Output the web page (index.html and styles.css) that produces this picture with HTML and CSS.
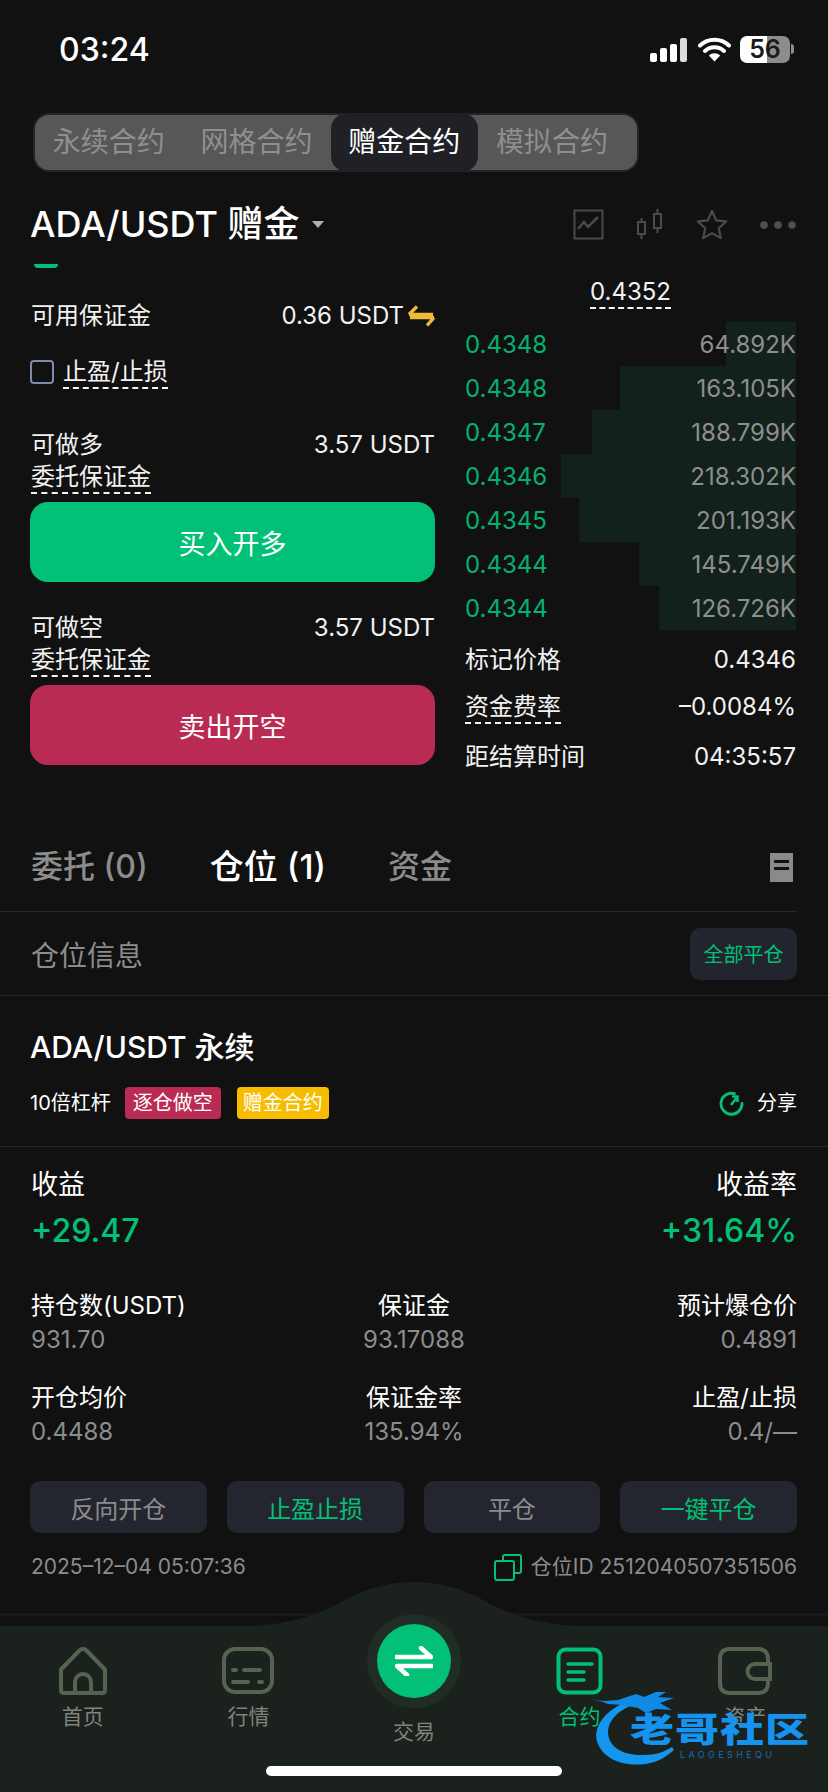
FILE: index.html
```html
<!DOCTYPE html>
<html lang="zh-CN">
<head>
<meta charset="utf-8">
<title>合约交易</title>
<link rel="stylesheet" href="styles.css">
</head>
<body>
<div class="page">
  <header class="status">
    <span class="clock">03:24</span>
    <div class="status-icons">
      <svg class="signal" width="38" height="24" viewBox="0 0 38 24"><rect x="0" y="15" width="7" height="9" rx="2" fill="#fff"/><rect x="10" y="10" width="7" height="14" rx="2" fill="#fff"/><rect x="20" y="6" width="7" height="18" rx="2" fill="#fff"/><rect x="30" y="0" width="7" height="24" rx="2" fill="#dcdcdc"/></svg>
      <svg class="wifi" width="33" height="25" viewBox="0 0 33 25"><path d="M2 8.5a21 21 0 0 1 29 0M7 14a14 14 0 0 1 19 0" fill="none" stroke="#fff" stroke-width="4" stroke-linecap="round"/><path d="M16.500 24.500 10.800 18.500a8.500 8.500 0 0 1 11.400 0z" fill="#fff"/></svg>
      <div class="battery"><span class="battery-level">56</span></div>
    </div>
  </header>

  <nav class="segment">
    <span class="seg-item">永续合约</span>
    <span class="seg-item">网格合约</span>
    <span class="seg-item seg-active">赠金合约</span>
    <span class="seg-item">模拟合约</span>
  </nav>

  <div class="symbol-bar">
    <div class="symbol"><span>ADA/USDT 赠金</span><i class="caret"></i></div>
    <div class="symbol-tools">
      <svg width="31" height="31" viewBox="0 0 31 31"><rect x="1.500" y="1.500" width="28" height="28" fill="none" stroke="#4b4b4b" stroke-width="2"/><path d="M5 20l6-7 4 5 10-10" fill="none" stroke="#4b4b4b" stroke-width="2.500"/></svg>
      <svg width="28" height="31" viewBox="0 0 28 31"><g fill="none" stroke="#4b4b4b" stroke-width="2"><rect x="2" y="13" width="7" height="12"/><rect x="18" y="5" width="7" height="14"/><path d="M5.500 9v4M5.500 25v5M21.500 0v5M21.500 19v5"/></g></svg>
      <svg width="32" height="31" viewBox="0 0 32 31"><path d="M16 2l4.200 9.300 10 1.100-7.500 6.800 2.100 9.900L16 24.100l-8.800 5 2.100-9.900-7.500-6.800 10-1.100z" fill="none" stroke="#4b4b4b" stroke-width="2.200" stroke-linejoin="round"/></svg>
      <svg width="36" height="10" viewBox="0 0 36 10"><circle cx="4" cy="5" r="3.800" fill="#4f4f4f"/><circle cx="18" cy="5" r="3.800" fill="#4f4f4f"/><circle cx="32" cy="5" r="3.800" fill="#4f4f4f"/></svg>
    </div>
  </div>

  <section class="trade">
    <div class="order-col">
      <i class="sliver"></i>
      <div class="row row-balance">
        <span>可用保证金</span>
        <span class="balance">0.36 USDT<svg width="27" height="22" viewBox="0 0 27 22"><path d="M1 9.500h24M1 9.500L9 1.500M26 12.500H2M26 12.500l-7 8" fill="none" stroke="#efb93c" stroke-width="3.400"/></svg></span>
      </div>
      <div class="row-check"><i class="checkbox"></i><span class="dashed">止盈/止损</span></div>
      <div class="row row-avail"><span>可做多</span><span>3.57 USDT</span></div>
      <div class="row-margin"><span class="dashed">委托保证金</span></div>
      <button class="cta cta-buy">买入开多</button>
      <div class="row row-avail row-avail-short"><span>可做空</span><span>3.57 USDT</span></div>
      <div class="row-margin"><span class="dashed">委托保证金</span></div>
      <button class="cta cta-sell">卖出开空</button>
    </div>

    <div class="book-col">
      <div class="last-price"><span class="dashed">0.4352</span></div>
      <div class="book">
        <div class="book-row"><i class="depth" style="width:70px"></i><span class="price">0.4348</span><span class="vol">64.892K</span></div>
        <div class="book-row"><i class="depth" style="width:176px"></i><span class="price">0.4348</span><span class="vol">163.105K</span></div>
        <div class="book-row"><i class="depth" style="width:204px"></i><span class="price">0.4347</span><span class="vol">188.799K</span></div>
        <div class="book-row"><i class="depth" style="width:235px"></i><span class="price">0.4346</span><span class="vol">218.302K</span></div>
        <div class="book-row"><i class="depth" style="width:217px"></i><span class="price">0.4345</span><span class="vol">201.193K</span></div>
        <div class="book-row"><i class="depth" style="width:157px"></i><span class="price">0.4344</span><span class="vol">145.749K</span></div>
        <div class="book-row"><i class="depth" style="width:137px"></i><span class="price">0.4344</span><span class="vol">126.726K</span></div>
      </div>
      <div class="info-row"><span>标记价格</span><span>0.4346</span></div>
      <div class="info-row"><span class="dashed">资金费率</span><span>–0.0084%</span></div>
      <div class="info-row info-last"><span>距结算时间</span><span>04:35:57</span></div>
    </div>
  </section>

  <div class="tabs">
    <span class="tab">委托 (0)</span>
    <span class="tab tab-active">仓位 (1)</span>
    <span class="tab">资金</span>
    <i class="doc-icon"></i>
  </div>

  <div class="pos-head">
    <span>仓位信息</span>
    <button class="close-all">全部平仓</button>
  </div>

  <div class="pos-title">
    <div class="pos-name">ADA/USDT 永续</div>
    <div class="pos-meta">
      <span>10倍杠杆</span>
      <span class="pill pill-red">逐仓做空</span>
      <span class="pill pill-gold">赠金合约</span>
      <span class="share">
        <svg width="25" height="25" viewBox="0 0 25 25"><path d="M15.500 2.700A10.500 10.500 0 1 0 23 12.500" fill="none" stroke="#02c076" stroke-width="2.800" stroke-linecap="round"/><path d="M12 14l5.500-7M13 5.500l5.500 0 0 5.500" fill="none" stroke="#02c076" stroke-width="2.600"/></svg>
        分享
      </span>
    </div>
  </div>

  <div class="pnl">
    <div class="pnl-cell"><div class="pnl-label">收益</div><div class="pnl-value">+29.47</div></div>
    <div class="pnl-cell pnl-end"><div class="pnl-label">收益率</div><div class="pnl-value">+31.64%</div></div>
  </div>

  <div class="stats">
    <div class="stat"><div class="stat-label">持仓数(USDT)</div><div class="stat-value">931.70</div></div>
    <div class="stat stat-mid"><div class="stat-label">保证金</div><div class="stat-value">93.17088</div></div>
    <div class="stat stat-end"><div class="stat-label">预计爆仓价</div><div class="stat-value">0.4891</div></div>
    <div class="stat"><div class="stat-label">开仓均价</div><div class="stat-value">0.4488</div></div>
    <div class="stat stat-mid"><div class="stat-label">保证金率</div><div class="stat-value">135.94%</div></div>
    <div class="stat stat-end"><div class="stat-label">止盈/止损</div><div class="stat-value">0.4/––</div></div>
  </div>

  <div class="actions">
    <button class="act">反向开仓</button>
    <button class="act act-on">止盈止损</button>
    <button class="act">平仓</button>
    <button class="act act-on">一键平仓</button>
  </div>

  <div class="foot">
    <span>2025–12–04 05:07:36</span>
    <span class="pos-id">
      <svg width="28" height="27" viewBox="0 0 28 27"><path d="M9 7V3a2 2 0 0 1 2-2h14a2 2 0 0 1 2 2v14a2 2 0 0 1-2 2h-5" fill="none" stroke="#02c076" stroke-width="2"/><rect x="1" y="7" width="19" height="19" rx="2" fill="none" stroke="#02c076" stroke-width="2"/></svg>
      仓位ID 2512040507351506
    </span>
  </div>

  <footer class="tabbar">
    <svg class="tabbar-bg" width="828" height="210" viewBox="0 0 828 210">
      <path d="M0 32.500H828" stroke="#191a26" stroke-width="2"/>
      <path d="M0 44H240C290 44 320 32 345 18C370 4 395 0 414 0C433 0 458 4 483 18C508 32 538 44 588 44H828V210H0Z" fill="#1b211c"/>
    </svg>
    <div class="tab-item">
      <svg width="50" height="48" viewBox="0 0 50 48"><path d="M3 22.500L21 4q4-4 8 0l18 18.500V43q0 3-3 3H6q-3 0-3-3zM17 46V35a8 8 0 0 1 16 0v11" fill="none" stroke="#566350" stroke-width="4" stroke-linejoin="round"/></svg>
      <span>首页</span>
    </div>
    <div class="tab-item">
      <svg width="52" height="48" viewBox="0 0 52 48"><rect x="2" y="2" width="48" height="43" rx="11" fill="none" stroke="#566350" stroke-width="4"/><path d="M11 23h3M22 23h16M11 35h15M37 35h3" stroke="#566350" stroke-width="4" stroke-linecap="round"/></svg>
      <span>行情</span>
    </div>
    <div class="tab-item tab-center">
      <div class="trade-halo"><div class="trade-btn">
        <svg width="38" height="30" viewBox="0 0 38 30"><path d="M1 11H36L26 2M37 20H2L12 29" fill="none" stroke="#fff" stroke-width="4.500" stroke-linecap="round" stroke-linejoin="round"/></svg>
      </div></div>
      <span>交易</span>
    </div>
    <div class="tab-item tab-current">
      <svg width="48" height="48" viewBox="0 0 48 48"><rect x="2.500" y="2.500" width="42" height="43" rx="7" fill="none" stroke="#02c076" stroke-width="4"/><path d="M12 17H36M12 25H28M12 33H28" stroke="#02c076" stroke-width="3.400" stroke-linecap="round"/></svg>
      <span>合约</span>
    </div>
    <div class="tab-item">
      <svg width="54" height="48" viewBox="0 0 54 48"><path d="M50 15V12q0-10-10-10H12Q2 2 2 12v24q0 10 10 10h28q10 0 10-10v-3" fill="none" stroke="#566350" stroke-width="4"/><path d="M52 17H37a7 7 0 0 0 0 15H52z" fill="#1b211c" stroke="#566350" stroke-width="4"/></svg>
      <span>资产</span>
    </div>
    <i class="home-bar"></i>
  </footer>

  <div class="badge">
    <svg class="badge-dragon" width="140" height="78" viewBox="0 0 140 78"><path d="M36 12C12 22 2 40 8 54c6 15 26 23 48 20 12-2 20-7 28-14l-2-3c-8 5-16 8-28 8C32 66 18 56 18 42c0-10 8-20 22-26z" fill="#1596ee"/><path d="M0 9l14 2 14-1 18-6 8 3 12-5 10 0-8 5 16 1-14 5 12 7-16-1-10 4-8-5-16-3-14-1-8-3z" fill="#0f8be6"/></svg>
    <div class="badge-name">老哥社区</div>
    <div class="badge-sub">LAOGESHEQU</div>
  </div>
</div>
</body>
</html>
```
FILE: styles.css
```css
* { box-sizing: border-box; }
html, body { margin: 0; padding: 0; background: #111; }
body {
  font-family: Inter, "Noto Sans CJK SC", sans-serif;
  color: #f2f2f2;
  font-size: 24px;
}
i { display: block; }
button { font-family: inherit; border: 0; padding: 0; display: block; }

.page { position: relative; width: 828px; height: 1792px; overflow: hidden; background: #111; }

/* system bar */
.status { height: 100px; padding: 32px 38px 0 59px; display: flex; justify-content: space-between; align-items: flex-start; }
.clock { font-size: 32px; line-height: 36px; font-weight: 500; color: #fff; }
.status-icons { display: flex; align-items: center; margin-top: 4px; }
.signal { margin-right: 10px; }
.wifi { margin-right: 9px; }
.battery {
  position: relative; width: 50px; height: 27px; border-radius: 7px;
  background: linear-gradient(90deg, #fff 0 54%, #8c8c8c 54% 100%);
}
.battery::after {
  content: ""; position: absolute; left: 51px; top: 8px; width: 3px; height: 10px;
  background: #8c8c8c; border-radius: 0 3px 3px 0;
}
.battery-level { display: block; text-align: center; font-size: 25px; line-height: 27px; font-weight: 600; color: #1a1a1a; }

/* product switcher */
.segment {
  margin: 13px 0 0 33px; width: 606px; height: 59px; padding: 0 11px 0 0;
  display: flex; align-items: stretch; background: #575757;
  border: 2px solid #242424; border-radius: 16px;
}
.seg-item { width: 151px; text-align: center; font-size: 28px; line-height: 55px; color: #8f8f8f; }
.seg-active { margin: -2px 0; line-height: 59px; background: #1f2127; color: #fff; border-radius: 16px; }

.symbol-bar { height: 92px; padding: 27px 32px 0 30px; display: flex; justify-content: space-between; align-items: flex-start; }
.symbol { display: flex; align-items: center; font-size: 36px; line-height: 50px; font-weight: 500; color: #fff; }
.caret { margin: 0 0 0 12px; width: 0; height: 0; border: 6px solid transparent; border-top: 7px solid #a9b4ba; border-bottom: 0; }
.symbol-tools { display: flex; align-items: center; gap: 32px; margin-top: 10px; }

/* order entry and book */
.trade { height: 540px; display: flex; padding: 0 32px 0 30px; justify-content: space-between; }
.order-col { width: 405px; }
.book-col { width: 331px; }
.sliver { margin-left: 4px; width: 24px; height: 4px; background: #02c076; border-radius: 0 0 12px 12px; }
.row { display: flex; justify-content: space-between; line-height: 34px; padding-left: 1px; }
.row-balance { margin-top: 31px; }
.balance { display: flex; align-items: center; gap: 4px; }
.row-check { display: flex; align-items: flex-start; margin-top: 24px; height: 34px; }
.checkbox { margin-top: 3px; width: 24px; height: 24px; border: 2px solid #7e8ab0; border-radius: 4px; margin-right: 9px; }
.dashed { display: inline-block; line-height: 30px; border-bottom: 2px dashed #f4f4f4; }
.row-avail { margin-top: 37px; }
.row-avail-short { margin-top: 29px; }
.row-margin { padding-left: 1px; height: 35px; }
.cta { width: 405px; height: 80px; border-radius: 18px; font-size: 27px; color: #fff; }
.cta-buy { margin-top: 5px; background: #02c076; }
.cta-sell { margin-top: 5px; background: #ba2b54; }

.last-price { margin-top: 13px; height: 45px; text-align: center; }
.book-row { position: relative; height: 44px; display: flex; justify-content: space-between; align-items: center; }
.depth { position: absolute; right: 0; top: 0; bottom: 0; background: #12211c; }
.price { position: relative; color: #05b171; }
.vol { position: relative; color: #8e8e8e; }
.info-row { display: flex; justify-content: space-between; align-items: flex-start; height: 47px; line-height: 30px; }
.book + .info-row { margin-top: 15px; }
.info-last { margin-top: 3px; }

/* record tabs */
.tabs { height: 108px; padding: 41px 35px 0 31px; display: flex; align-items: flex-start; border-bottom: 1px solid #272727; width: 797px; padding-right: 4px; }
.tab { font-size: 32px; line-height: 44px; color: #8c8c8c; font-weight: 500; margin-right: 62px; }
.tab-active { font-size: 34px; color: #fff; }
.doc-icon {
  margin: 8px 0 0 auto; width: 23px; height: 29px; background: #8a8a8a;
  background-image: linear-gradient(#111, #111), linear-gradient(#111, #111);
  background-size: 15px 3px; background-repeat: no-repeat; background-position: 4px 7px, 4px 14px;
}

.pos-head {
  height: 84px; padding: 0 31px; display: flex; justify-content: space-between; align-items: center;
  border-bottom: 1px solid #272727; font-size: 28px; color: #8c8c8c;
}
.close-all { width: 107px; height: 52px; border-radius: 10px; background: #23252e; color: #02c076; font-size: 20px; }

.pos-title { height: 151px; padding: 29px 31px 0 30px; border-bottom: 1px solid #272727; }
.pos-name { font-size: 30px; line-height: 44px; font-weight: 500; color: #fff; }
.pos-meta { margin-top: 18px; display: flex; align-items: center; font-size: 20px; line-height: 32px; color: #fff; }
.pill { margin-left: 14px; height: 32px; border-radius: 4px; padding: 0 8px; color: #fff; }
.pill-red { background: #ba2b54; }
.pill-gold { margin-left: 16px; padding: 0 6px; background: #f5bc00; }
.share { margin-left: auto; display: flex; align-items: center; gap: 13px; }

.pnl { padding: 18px 31px 0; display: flex; justify-content: space-between; }
.pnl-end { text-align: right; }
.pnl-label { font-size: 27px; line-height: 40px; color: #fff; }
.pnl-value { margin-top: 4px; font-size: 32px; line-height: 44px; font-weight: 500; color: #02c076; }

.stats { margin-top: 36px; padding: 0 31px; display: grid; grid-template-columns: 1fr 1fr 1fr; row-gap: 24px; }
.stat-mid { text-align: center; }
.stat-end { text-align: right; }
.stat-label { font-size: 24px; line-height: 34px; color: #fff; }
.stat-value { font-size: 24px; line-height: 34px; color: #8c8c8c; }

.actions { margin-top: 32px; padding: 0 31px 0 30px; display: grid; grid-template-columns: repeat(4, 1fr); gap: 20px; }
.act { height: 52px; border-radius: 10px; background: #24262f; color: #8c8c8c; font-size: 24px; }
.act-on { color: #02c076; }

.foot { margin-top: 19px; padding: 0 31px; display: flex; justify-content: space-between; align-items: center; font-size: 21px; line-height: 30px; color: #8c8c8c; }
.pos-id { display: flex; align-items: center; gap: 9px; }

/* bottom navigation */
.tabbar { position: absolute; left: 0; bottom: 0; width: 828px; height: 210px; display: flex; }
.tabbar-bg { position: absolute; left: 0; top: 0; }
.tab-item { position: relative; flex: 1; padding-top: 65px; display: flex; flex-direction: column; align-items: center; font-size: 21px; line-height: 30px; color: #7f847e; }
.tab-item span { margin-top: 7px; }
.tab-current { color: #02c076; }
.tab-center { padding-top: 32px; }
.tab-center span { margin-top: 9px; }
.trade-halo { width: 94px; height: 94px; padding: 10px; border-radius: 50%; background: #1f2d25; }
.trade-btn { width: 74px; height: 74px; border-radius: 50%; background: #02c076; display: flex; align-items: center; justify-content: center; }
.home-bar { position: absolute; left: 266px; bottom: 16px; width: 296px; height: 10px; background: #fff; border-radius: 5px; }

/* community mark over the corner */
.badge { position: absolute; left: 590px; top: 1690px; width: 224px; height: 78px; }
.badge-dragon { position: absolute; left: 0; top: 0; }
.badge-name {
  position: absolute; left: 40px; top: 22px; font-size: 44px; line-height: 44px; font-weight: 900;
  letter-spacing: 1px; color: #1693ee; transform: scaleY(.78); transform-origin: left top; white-space: nowrap;
}
.badge-sub { position: absolute; left: 90px; top: 60px; font-size: 9px; line-height: 10px; letter-spacing: 3.400px; color: #1a6db0; }
```
